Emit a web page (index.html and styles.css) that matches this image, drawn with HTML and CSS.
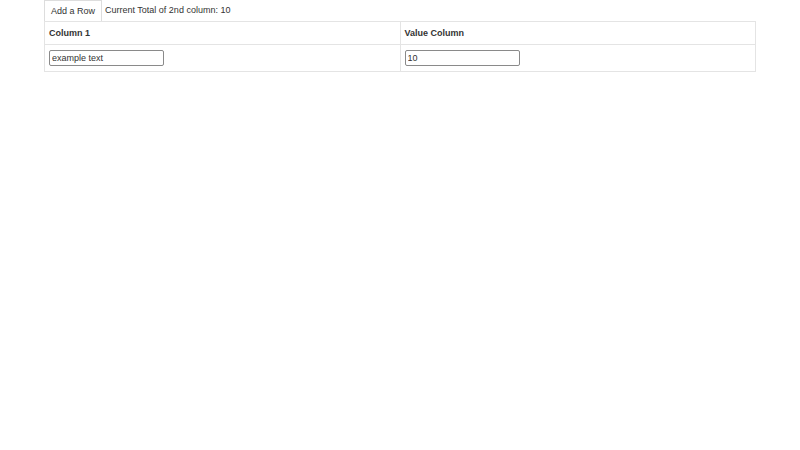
FILE: index.html
```html
<!DOCTYPE html>
<html>
<head>
<meta charset="utf-8">
<link rel="stylesheet" href="styles.css">
</head>
<body>
<div class="wrap">
  <div class="toolbar">
    <button class="btn">Add a Row</button>
    <span class="total">Current Total of 2nd column: 10</span>
  </div>
  <table class="grid">
    <thead>
      <tr><th>Column 1</th><th>Value Column</th></tr>
    </thead>
    <tbody>
      <tr>
        <td><input class="field" type="text" value="example text"></td>
        <td><input class="field" type="text" value="10"></td>
      </tr>
    </tbody>
  </table>
</div>
</body>
</html>
```
FILE: styles.css
```css
html, body {
  margin: 0;
  padding: 0;
  background: #fff;
}
body {
  font-family: "Liberation Sans", Arial, sans-serif;
  font-size: 9px;
  color: #333;
}
.wrap {
  width: 712px;
  margin: 0 auto;
}
.toolbar {
  display: flex;
  align-items: center;
  height: 21px;
}
.btn {
  font-family: "Liberation Sans", Arial, sans-serif;
  font-size: 9px;
  color: #333;
  background: #fff;
  border: 1px solid #ddd;
  border-bottom: none;
  height: 21px;
  width: 58px;
  padding: 0;
  margin: 0 3px 0 0;
}
.total {
  color: #333;
  position: relative;
  top: -1px;
}
.grid {
  width: 712px;
  border-collapse: collapse;
  table-layout: fixed;
}
.grid th, .grid td {
  border: 1px solid #e4e4e4;
  text-align: left;
  padding: 0 4px;
}
.grid th {
  height: 22px;
  font-weight: bold;
}
.grid td {
  height: 26px;
}
.field {
  box-sizing: border-box;
  width: 115px;
  height: 16px;
  border: 1px solid #8a8a8a;
  border-radius: 2px;
  font-family: "Liberation Sans", Arial, sans-serif;
  font-size: 9px;
  color: #333;
  padding: 0 2px;
  margin: 0;
  display: block;
}
```
